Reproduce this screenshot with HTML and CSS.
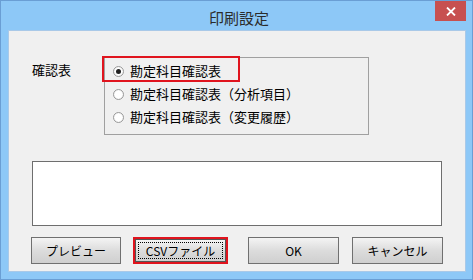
FILE: index.html
```html
<!DOCTYPE html>
<html lang="ja">
<head>
    <meta charset="UTF-8">
    <title>印刷設定</title>
    <link rel="stylesheet" href="styles.css">
</head>
<body>
    <div class="window">
        <div class="titlebar">
            <span></span>
            <span class="title">印刷設定</span>
            <button class="close">
                <svg width="10" height="9" viewBox="0 0 10 9"><path d="M1 0.5 L9 8.5 M9 0.5 L1 8.5" stroke="#fff" stroke-width="1.8"/></svg>
            </button>
        </div>

        <div class="client">
            <div class="choice-row">
                <div class="label">確認表</div>
                <div class="group">
                    <label class="radio checked"><span class="dot"></span>勘定科目確認表</label>
                    <label class="radio"><span class="dot"></span>勘定科目確認表（分析項目）</label>
                    <label class="radio"><span class="dot"></span>勘定科目確認表（変更履歴）</label>
                    <div class="mark mark-radio"></div>
                </div>
            </div>

            <div class="memo"></div>

            <div class="buttons">
                <button class="btn btn-preview">プレビュー</button>
                <div class="mark-wrap">
                    <button class="btn btn-csv"><span class="focus">CSVファイル</span></button>
                </div>
                <button class="btn btn-ok">OK</button>
                <button class="btn btn-cancel">キャンセル</button>
            </div>
        </div>
    </div>
</body>
</html>
```

FILE: styles.css
```css
body {
    margin: 0;
    font-family: "Noto Sans CJK JP", "Liberation Sans", sans-serif;
    background: #8dc8f7;
}

.window {
    width: 473px;
    height: 280px;
    box-sizing: border-box;
    border: 1px solid #6a9ed4;
    background: #8dc8f7;
    padding: 0 6px 7px 7px;
    display: flex;
    flex-direction: column;
}

.titlebar {
    height: 29px;
    display: grid;
    grid-template-columns: 1fr auto 1fr;
    align-items: start;
}

.title {
    font-size: 15px;
    color: #2b2b2b;
    line-height: 15px;
    padding-top: 9px;
    padding-left: 4px;
}

.close {
    justify-self: end;
    width: 31px;
    height: 20px;
    border: none;
    padding: 0;
    background: #c75050;
    display: flex;
    align-items: center;
    justify-content: center;
}

.client {
    flex: 1;
    background: #f0f0f0;
    border: 1px solid #a9c9e8;
    box-sizing: border-box;
    padding: 26px 0 0 23px;
    font-size: 13px;
    color: #000;
}

.choice-row {
    display: flex;
    align-items: flex-start;
}

.label {
    width: 72px;
    padding-top: 5px;
    line-height: 16px;
}

.group {
    position: relative;
    width: 265px;
    height: 78px;
    box-sizing: border-box;
    border: 1px solid #a0a0a0;
    padding: 5px 0 0 8px;
    display: flex;
    flex-direction: column;
    gap: 7px;
}

.radio {
    display: flex;
    align-items: center;
    height: 16px;
    line-height: 16px;
    gap: 6px;
}

.dot {
    width: 9px;
    height: 9px;
    border-radius: 50%;
    border: 1px solid #9a9a9a;
    background: radial-gradient(circle, #fff 50%, #e6e6e6 100%);
    position: relative;
}

.checked .dot::after {
    content: "";
    position: absolute;
    left: 2px;
    top: 2px;
    width: 5px;
    height: 5px;
    border-radius: 50%;
    background: #222;
}

.mark {
    position: absolute;
    border: 2px solid #e0141e;
}

.mark-radio {
    left: -3px;
    top: -2px;
    width: 134px;
    height: 22px;
}

.memo {
    width: 410px;
    height: 65px;
    box-sizing: border-box;
    margin-top: 26px;
    background: #fff;
    border: 1px solid #6e6e6e;
}

.buttons {
    display: flex;
    align-items: center;
    margin-top: 11px;
    margin-left: -1px;
}

.btn {
    height: 27px;
    width: 90px;
    box-sizing: border-box;
    border: 1px solid #707070;
    background: linear-gradient(#f4f4f4, #dcdcdc 50%, #cfcfcf);
    font-family: "Noto Sans CJK JP", "Liberation Sans", sans-serif;
    font-size: 12px;
    color: #000;
    padding: 0;
}

.mark-wrap {
    margin-left: 12px;
    border: 2px solid #e0141e;
    display: flex;
}

.btn-csv {
    width: 91px;
    height: 23px;
    border-color: #555;
    padding: 2px;
    display: flex;
}

.focus {
    flex: 1;
    border: 1px dotted #000;
    line-height: 15px;
}

.btn-ok {
    margin-left: 20px;
    width: 91px;
}

.btn-cancel {
    margin-left: 13px;
    width: 91px;
}
```
